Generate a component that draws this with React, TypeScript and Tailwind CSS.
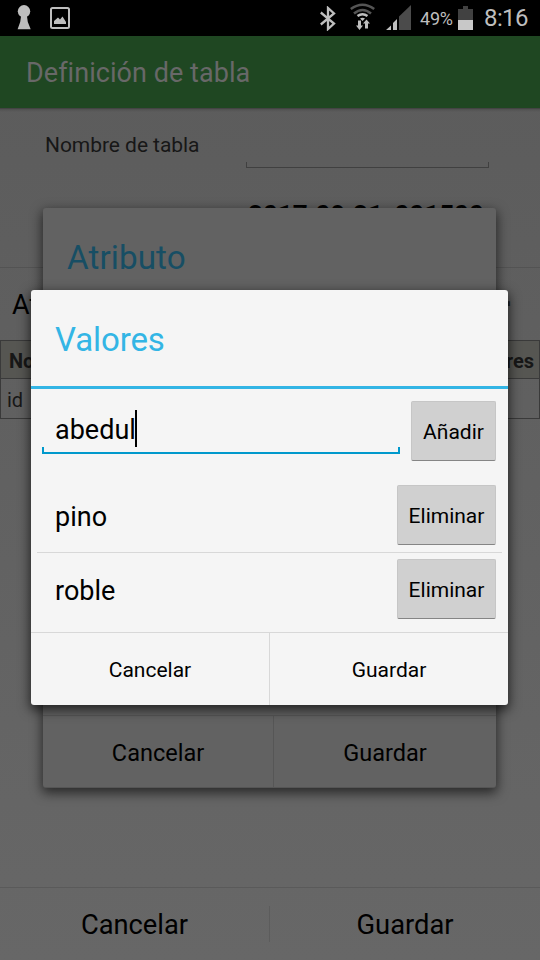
import React, { useState } from 'react';

const StatusBar: React.FC = () => (
  <header className="flex h-9 shrink-0 items-center bg-black pl-[17px] text-[#bebebe]">
    <svg width="14" height="26" viewBox="0 0 14 26" fill="currentColor">
      <circle cx="7" cy="6.3" r="6.2" />
      <path d="M4.2 10h5.6l1 7 2.900 7.200H.6l2.600-7.200z" />
    </svg>
    <svg className="ml-[19px]" width="20" height="22" viewBox="0 0 20 22">
      <rect x="1" y="1" width="18" height="20" rx="1.5" fill="none" stroke="currentColor" strokeWidth="2" />
      <path d="M4 17v-3l4-3.500 2 2 2.500-3L16 15v2z" fill="currentColor" />
    </svg>
    <svg className="ml-[250px]" width="16" height="25" viewBox="0 0 16 25" fill="none" stroke="currentColor" strokeWidth="2.3">
      <path d="M.8 6.500l13.200 11-6 5.500V2l6 5.500L.8 18.500" />
    </svg>
    <svg className="ml-[14px]" width="25" height="30" viewBox="0 0 25 30" fill="none">
      <path d="M.8 6q11.700-8.500 23.400 0M4 10.500q8.500-7 17 0" stroke="#555" strokeWidth="2.6" />
      <path d="M7.500 13q5-3.500 10 0" stroke="currentColor" strokeWidth="2.4" />
      <path d="M10 15.500q2.500-1.500 5 0l-2.500 2.500zM8 17.500h3v5h2l-3.500 4.500L6 22.500h2zM15 25.500h3v-5h2l-3.500-4L13 20.500h2z" fill="currentColor" />
    </svg>
    <svg className="ml-[11px]" width="25" height="26" viewBox="0 0 25 26">
      <path d="M13 11.500L25 0v25H13z" fill="#4b4b4b" />
      <path d="M0 25l5-4.500V25zM7 18l4-4v11H7z" fill="currentColor" />
    </svg>
    <span className="ml-[9px] w-[38px] text-[18px] tracking-[-0.2px] whitespace-nowrap">49%</span>
    <svg width="15" height="24" viewBox="0 0 15 24">
      <path d="M5 0h5v3h5v11H0V3h5z" fill="#414141" />
      <path d="M0 14h15v10H0z" fill="#c8c8c8" />
    </svg>
    <span className="ml-[11px] text-[24px] tracking-[-0.6px] whitespace-nowrap">8:16</span>
  </header>
);

const TableScreen: React.FC = () => (
  <div className="flex h-[960px] flex-col bg-linear-to-b from-[#5b5b5b] to-[#676767]">
    <StatusBar />
    <div className="flex h-[73px] shrink-0 items-center border-b border-[#444] bg-[#1f4722] pt-[2px] pl-[26px] text-[27px] tracking-[0.05px] text-[#686868]">
      Definición de tabla
    </div>
    <div className="h-[159px] shrink-0 border-b border-[#535353]">
      <div className="h-[3px] bg-linear-to-b from-[#505050] to-transparent" />
      <div className="flex h-[56px] items-end pl-[45px]">
        <span className="w-[201px] pb-[7px] text-[21px] tracking-[-0.05px] text-[#171717]">Nombre de tabla</span>
        <div className="h-[6px] w-[243px] border border-t-0 border-[#404040]" />
      </div>
      <div className="h-[74px] pt-[28px] pl-[248px] text-[26px] font-bold text-black">
        2017<span className="tracking-[-2.5px]">-</span>09<span className="tracking-[-2.5px]">-</span>21_001500
      </div>
    </div>
    <div className="flex h-[72px] shrink-0 items-center justify-between pt-[2px] pr-[29px] pl-[12px] text-[27px] text-black">
      <span>Atributos</span>
      <span className="mb-[2px] text-[38px] leading-none font-bold text-[#222]">+</span>
    </div>
    <table className="h-[79px] w-full border-collapse text-[20px] text-[#171717]">
      <tbody>
        <tr className="bg-[#565652] font-bold">
          <td className="h-[38px] border border-[#3a3a3a] pt-[2px] pl-[8px]">Nombre</td>
          <td className="border border-[#3a3a3a] pt-[2px] pr-[5px] text-right">Valores</td>
        </tr>
        <tr>
          <td className="h-[40px] border border-[#3a3a3a] pt-[2px] pl-[6px]">id</td>
          <td className="border border-[#3a3a3a]" />
        </tr>
      </tbody>
    </table>
    <footer className="mt-auto flex h-[73px] shrink-0 items-center border-t border-[#5a5a5a] text-[27.3px] text-black">
      <button className="w-[269px] pt-[2px]">Cancelar</button>
      <div className="h-[36px] w-px bg-[#5c5c5c]" />
      <button className="flex-1 pt-[2px]">Guardar</button>
    </footer>
  </div>
);

const AttributeDialog: React.FC = () => (
  <div className="absolute inset-0 pt-[208px] pl-[43px]">
    <div className="flex h-[580px] w-[453px] flex-col rounded-[3px] border-b border-[#555] bg-[#626262] shadow-[0_4px_12px_1px_rgba(0,0,0,0.6)]">
      <h2 className="pt-[25px] pl-[24px] text-[33.2px] leading-[50px] tracking-[0.1px] text-[#174e64]">Atributo</h2>
      <div className="mt-auto flex h-[72px] border-t border-[#565656] text-[23.5px] text-black">
        <button className="w-[231px] border-r border-[#565656] pt-[4px]">Cancelar</button>
        <button className="flex-1 pt-[4px]">Guardar</button>
      </div>
    </div>
  </div>
);

const ValueButton: React.FC<{ label: string; className: string; onClick: () => void }> = ({ label, className, onClick }) => (
  <button
    onClick={onClick}
    className={`h-[60px] shrink-0 rounded-[2px] border border-[#c6c6c6] border-b-[#858585] bg-[#d0d0d0] pt-[4px] text-[21px] ${className}`}
  >
    {label}
  </button>
);

const ValuesDialog: React.FC = () => {
  const [values, setValues] = useState(['pino', 'roble']);
  const [text, setText] = useState('abedul');

  const addValue = () => {
    if (!text) return;
    setValues([...values, text]);
    setText('');
  };

  return (
    <div className="absolute inset-0 pt-[290px] pl-[31px]">
      <div className="flex min-h-[415px] w-[477px] flex-col rounded-[3px] bg-[#f5f5f5] text-black shadow-[0_4px_12px_1px_rgba(0,0,0,0.65)]">
        <h2 className="h-[99px] border-b-3 border-[#33b5e5] pt-[25px] pl-[24px] text-[33px] leading-[50px] tracking-[-0.1px] text-[#33b5e5]">
          Valores
        </h2>
        <div className="flex h-[90px] items-start pt-[12px] pr-[12px] pl-[11px]">
          <div className="relative mr-[11px] h-[53px] flex-1">
            <div className="flex items-start pt-[9px] pl-[13px] text-[27px]">
              <span className="leading-[41px]">{text}</span>
              <span className="-ml-px h-[37px] w-[2px] bg-black" />
            </div>
            <div className="absolute inset-x-0 bottom-0 h-[7px] border-2 border-t-0 border-[#0099cc]" />
          </div>
          <ValueButton label="Añadir" className="w-[85px]" onClick={addValue} />
        </div>
        <ul className="mx-[6px] divide-y divide-[#d8d8d8]">
          {values.map(value => (
            <li key={value} className="flex h-[74px] items-start justify-between pt-[6px] pr-[6px] pl-[18px] text-[27px]">
              <span className="leading-[64px]">{value}</span>
              <ValueButton
                label="Eliminar"
                className="w-[99px]"
                onClick={() => setValues(values.filter(v => v !== value))}
              />
            </li>
          ))}
        </ul>
        <div className="mt-auto flex h-[73px] border-t border-[#d8d8d8] text-[21px]">
          <button className="w-[239px] border-r border-[#d8d8d8] pt-[4px]">Cancelar</button>
          <button className="flex-1 pt-[4px]">Guardar</button>
        </div>
      </div>
    </div>
  );
};

const App: React.FC = () => {
  return (
    <div className="relative h-[960px] w-[540px] overflow-hidden font-['Roboto',sans-serif]">
      <TableScreen />
      <AttributeDialog />
      <ValuesDialog />
    </div>
  );
};

export default App;
